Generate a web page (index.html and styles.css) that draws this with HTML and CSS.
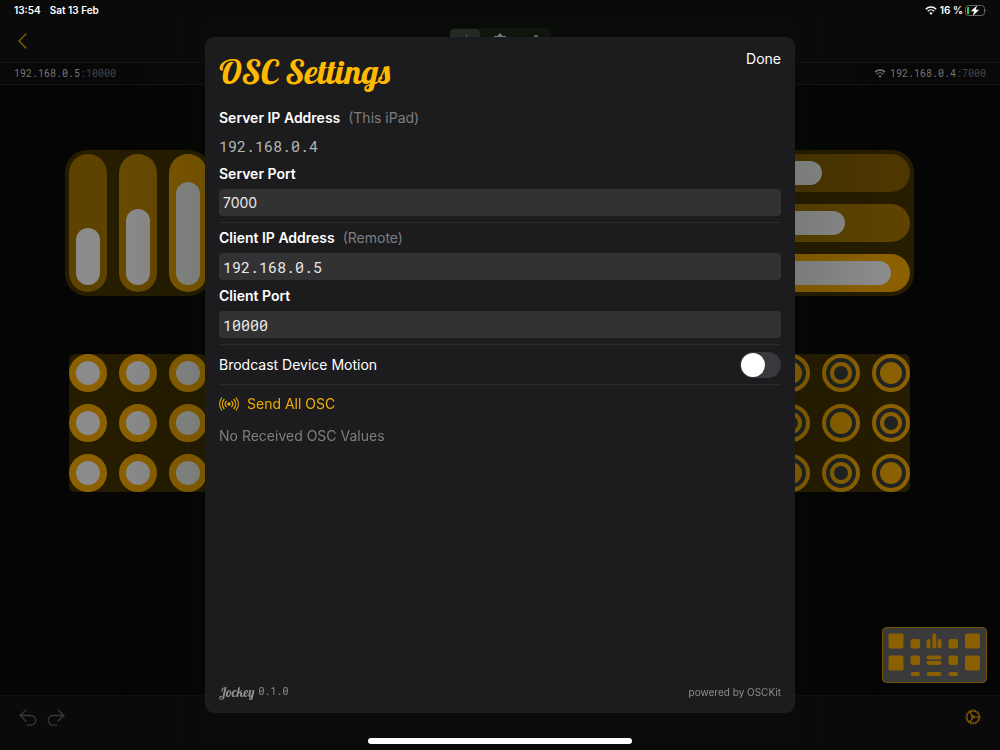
FILE: index.html
```html
<!DOCTYPE html>
<html lang="en">
<head>
  <meta charset="UTF-8">
  <meta name="viewport" content="width=device-width, initial-scale=1.0">
  <title>Jockey - OSC Settings</title>
  <link rel="stylesheet" href="styles.css">
</head>
<body>
  <svg class="defs">
    <symbol id="wifi" viewBox="0 0 12 9">
      <path d="M.8 3.2a7.4 7.4 0 0 1 10.4 0M2.7 5.2a4.7 4.7 0 0 1 6.6 0" fill="none" stroke="currentColor" stroke-width="1.4"/>
      <path d="M6 8.8 4.3 7a2.4 2.4 0 0 1 3.4 0z" fill="currentColor"/>
    </symbol>
  </svg>

  <div class="app">
    <header class="status">
      <span>13:54</span>
      <span>Sat 13 Feb</span>
      <svg class="wifi push" width="12" height="9"><use href="#wifi"/></svg>
      <span class="percent">16 %</span>
      <svg class="battery" width="22" height="11" viewBox="0 0 22 11">
        <rect x=".5" y=".5" width="19" height="10" rx="3" fill="none" stroke="#666"/>
        <path d="M20.7 3.8q1.2 1.7 0 3.4z" fill="#666"/>
        <path d="M2 3.2Q2 2 3.2 2H4v7h-.8Q2 9 2 7.800z" fill="#30d158"/>
        <path d="M12 .4 5.700 6.300h3.400L7.800 10.700l6.400-6h-3.400z" fill="#fff"/>
      </svg>
    </header>

    <nav class="toolbar">
      <button class="icon back" aria-label="Back">
        <svg width="10" height="16" viewBox="0 0 10 16"><path d="M9 1 2 8l7 7"/></svg>
      </button>
      <div class="tabs">
        <button class="on" aria-label="Edit"><svg width="14" height="18" viewBox="0 0 14 18"><path d="M9.500 1 5 10h3L5.500 17 11 7H8z"/></svg></button>
        <button aria-label="Pads"><svg width="14" height="18" viewBox="0 0 14 18"><path d="M7 1 10 4H13v10H1V4h3z"/></svg></button>
        <button aria-label="More"><svg width="14" height="18" viewBox="0 0 14 18"><circle cx="8" cy="5" r="2"/><circle cx="8" cy="12" r="2"/></svg></button>
      </div>
    </nav>

    <div class="addresses">
      <span>192.168.0.5<span class="port">:10000</span></span>
      <span><svg class="wifi" width="12" height="9"><use href="#wifi"/></svg>192.168.0.4<span class="port">:7000</span></span>
    </div>

    <main class="canvas">
      <div class="sliders">
        <div class="slider low"><div class="fill" style="height: 46%"></div><input type="range" value="46" aria-label="Fader 1"></div>
        <div class="slider mid"><div class="fill" style="height: 61%"></div><input type="range" value="61" aria-label="Fader 2"></div>
        <div class="slider high"><div class="fill" style="height: 83%"></div><input type="range" value="83" aria-label="Fader 3"></div>
      </div>
      <div class="sliders rows">
        <div class="slider dim"><div class="fill" style="width: 35%"></div><input type="range" value="35" aria-label="Slider 1"></div>
        <div class="slider low"><div class="fill" style="width: 53%"></div><input type="range" value="53" aria-label="Slider 2"></div>
        <div class="slider full"><div class="fill" style="width: 90%"></div><input type="range" value="90" aria-label="Slider 3"></div>
      </div>
      <div class="pads">
        <button class="pad" aria-label="Pad 1"></button>
        <button class="pad" aria-label="Pad 2"></button>
        <button class="pad" aria-label="Pad 3"></button>
        <button class="pad" aria-label="Pad 4"></button>
        <button class="pad" aria-label="Pad 5"></button>
        <button class="pad" aria-label="Pad 6"></button>
        <button class="pad" aria-label="Pad 7"></button>
        <button class="pad" aria-label="Pad 8"></button>
        <button class="pad" aria-label="Pad 9"></button>
      </div>
      <div class="pads">
        <button class="ring on" aria-label="Toggle 1"></button>
        <button class="ring" aria-label="Toggle 2"></button>
        <button class="ring on" aria-label="Toggle 3"></button>
        <button class="ring" aria-label="Toggle 4"></button>
        <button class="ring on" aria-label="Toggle 5"></button>
        <button class="ring" aria-label="Toggle 6"></button>
        <button class="ring on" aria-label="Toggle 7"></button>
        <button class="ring" aria-label="Toggle 8"></button>
        <button class="ring on" aria-label="Toggle 9"></button>
      </div>

      <svg class="minimap" width="105" height="56" viewBox="0 0 105 56">
        <rect x=".5" y=".5" width="104" height="55" rx="4" fill="#3a3a3a" stroke="#7a5500"/>
        <g fill="#8b6000">
          <rect x="6.500" y="6.500" width="15" height="15" rx="2"/><rect x="6.500" y="28.500" width="15" height="15" rx="2"/>
          <rect x="83" y="6.500" width="15" height="15" rx="2"/><rect x="83" y="28.500" width="15" height="15" rx="2"/>
          <rect x="28.500" y="12" width="9.500" height="9.500" rx="2"/><rect x="28.500" y="28.500" width="9.500" height="9.500" rx="2"/>
          <rect x="66.500" y="12" width="9.500" height="9.500" rx="2"/><rect x="66.500" y="28.500" width="9.500" height="9.500" rx="2"/>
          <rect x="44.500" y="12" width="4" height="9.500" rx="2"/><rect x="50.300" y="6.500" width="4" height="15" rx="2"/><rect x="55.500" y="12" width="4" height="9.500" rx="2"/>
          <rect x="44.500" y="28.500" width="15" height="4" rx="2"/><rect x="44.500" y="34" width="15" height="4" rx="2"/>
          <rect x="28.500" y="45" width="9.500" height="4" rx="2"/><rect x="44.500" y="45" width="15" height="4" rx="2"/><rect x="66.500" y="45" width="9.500" height="4" rx="2"/>
        </g>
      </svg>
    </main>

    <footer class="bottom">
      <button class="icon" aria-label="Undo">
        <svg width="18" height="17" viewBox="0 0 18 17"><path d="M7 1 1 6.500 7 12M1 6.500h11a4.800 4.800 0 0 1 0 9.600H8"/></svg>
      </button>
      <button class="icon" aria-label="Redo">
        <svg width="18" height="17" viewBox="0 0 18 17"><path d="m11 1 6 5.500-6 5.500M17 6.500H6a4.800 4.800 0 0 0 0 9.600h4"/></svg>
      </button>
      <button class="icon gear push" aria-label="Settings">
        <svg width="16" height="16" viewBox="0 0 16 16">
          <circle cx="8" cy="8" r="6.200"/>
          <circle class="teeth" cx="8" cy="8" r="7.200"/>
          <circle cx="8" cy="8" r="1.200"/>
          <path d="M9.300 8H14M7.300 6.900 5 2.800M7.300 9.100 5 13.200"/>
        </svg>
      </button>
    </footer>
  </div>

  <div class="overlay">
    <section class="modal" role="dialog" aria-labelledby="title">
      <div class="head">
        <h1 id="title">OSC Settings</h1>
        <button class="done">Done</button>
      </div>
      <form>
        <div class="name"><b>Server IP Address</b> <span>(This iPad)</span></div>
        <div class="ip">192.168.0.4</div>
        <label class="name" for="sPort"><b>Server Port</b></label>
        <input class="field plain" type="text" id="sPort" value="7000">
        <hr>
        <label class="name" for="cIp"><b>Client IP Address</b> <span>(Remote)</span></label>
        <input class="field" type="text" id="cIp" value="192.168.0.5">
        <label class="name" for="cPort"><b>Client Port</b></label>
        <input class="field" type="text" id="cPort" value="10000">
        <hr>
        <div class="motion">
          <label for="motion">Brodcast Device Motion</label>
          <input class="switch" type="checkbox" id="motion">
        </div>
        <hr class="tight">
        <button class="send" type="button">
          <svg width="20" height="14" viewBox="0 0 20 14">
            <circle cx="10" cy="7" r="1.700"/>
            <path d="M7.300 4.300a4 4 0 0 0 0 5.400M12.700 4.300a4 4 0 0 1 0 5.400M5 2.500a7 7 0 0 0 0 9M15 2.500a7 7 0 0 1 0 9M2.700 1a10 10 0 0 0 0 12M17.300 1a10 10 0 0 1 0 12"/>
          </svg>
          Send All OSC
        </button>
        <p class="none">No Received OSC Values</p>
      </form>
      <div class="foot">
        <span class="brand">Jockey</span>
        <span class="version">0.1.0</span>
        <span class="push">powered by OSCKit</span>
      </div>
    </section>
    <div class="home"></div>
  </div>
</body>
</html>
```
FILE: styles.css
```css
*,
*::before {
  box-sizing: border-box;
}
body {
  margin: 0;
  background: #050505;
  color: #fff;
  font-family: Inter, "Liberation Sans", sans-serif;
  font-size: 14px;
}
button {
  border: 0;
  padding: 0;
  background: none;
  color: inherit;
  font: inherit;
  cursor: pointer;
}
.defs {
  display: none;
}
.push {
  margin-left: auto;
}
.app {
  min-height: 100vh;
  display: flex;
  flex-direction: column;
}

/* status bar and toolbar */
.status {
  position: relative;
  z-index: 3;
  height: 20px;
  padding: 0 13px 0 14px;
  display: flex;
  align-items: center;
  font-size: 10px;
  font-weight: 600;
}
.status span + span {
  margin-left: 9px;
}
.status .percent {
  margin: 0 2px 0 3px;
}
.status,
.toolbar {
  background: #0a0a0a;
}
.toolbar {
  height: 42px;
  padding: 0 17px;
  display: grid;
  grid-template-columns: 1fr auto 1fr;
  align-items: center;
}
.icon {
  display: flex;
  color: #383838;
}
.icon svg {
  fill: none;
  stroke: currentColor;
  stroke-width: 1.3;
  stroke-linecap: round;
}
.back,
.gear {
  color: #8b6000;
}
.icon .teeth {
  stroke-width: 1;
  stroke-dasharray: 1.26 1.26;
  stroke-linecap: butt;
}
.gear svg {
  stroke-width: 1.2;
}
.tabs {
  display: flex;
  gap: 5px;
  width: 102px;
  height: 26px;
  padding: 1px;
  border-radius: 6px;
  background: #121611;
}
.tabs button {
  flex: 1;
  border-radius: 5px;
}
.tabs .on {
  background: #292e29;
}
.tabs svg {
  display: block;
  margin: auto;
  fill: #858985;
}
.addresses {
  height: 23px;
  padding: 0 14px;
  display: flex;
  align-items: center;
  justify-content: space-between;
  border-top: 1px solid #151515;
  border-bottom: 1px solid #151515;
  background: #080808;
  color: #747474;
  font-family: "Roboto Mono", "Liberation Mono", monospace;
  font-size: 10px;
}
.addresses > span {
  display: flex;
  align-items: center;
}
.addresses .wifi {
  margin-right: 4px;
}
.port {
  color: #454545;
}

/* controls */
.canvas {
  position: relative;
  flex: 1;
  padding: 65px 86px 0 65px;
  display: grid;
  grid-template-columns: 146px 146px;
  justify-content: space-between;
  align-content: start;
  gap: 58px 0;
}
.sliders {
  height: 146px;
  padding: 4px;
  display: flex;
  gap: 12px;
  border-radius: 22px;
  background: #261c00;
}
.rows {
  flex-direction: column;
}
.slider {
  flex: 1;
  display: grid;
  align-items: end;
  padding: 7px;
  border-radius: 19px;
}
.slider > * {
  grid-area: 1 / 1;
}
.slider input {
  width: 100%;
  height: 100%;
  margin: 0;
  opacity: 0;
}
.sliders:not(.rows) input {
  writing-mode: vertical-lr;
  direction: rtl;
}
.fill {
  border-radius: 12px;
  background: #8b8b8b;
}
.rows .fill {
  height: 100%;
}
.dim { background: #4d3600; }
.low { background: #5d4200; }
.mid { background: #694a00; }
.high { background: #805800; }
.full { background: #8b6000; }

.pads {
  width: 138px;
  margin: 0 4px;
  display: grid;
  grid-template-columns: repeat(3, 38px);
  gap: 12px;
  border-radius: 6px;
  background: #261c00;
}
.pad,
.ring {
  height: 38px;
  border-radius: 50%;
}
.pad {
  border: 7px solid #8b6000;
  background: #8b8b8b;
}
.ring {
  display: flex;
  border: 4px solid #8b6000;
  padding: 4px;
  background: #202322;
}
.ring::before {
  content: "";
  width: 22px;
  height: 22px;
  border: 4px solid #8b6000;
  border-radius: 50%;
}
.ring.on::before {
  background: #8b6000;
}
.minimap {
  position: absolute;
  right: 13px;
  bottom: 12px;
}
.bottom {
  height: 55px;
  padding: 13px 19px 0;
  display: flex;
  align-items: flex-start;
  gap: 10px;
  border-top: 1px solid #111;
  background: #0a0a0a;
}

/* settings sheet */
.overlay {
  position: fixed;
  inset: 0;
  z-index: 2;
  padding: 37px 16px 6px;
  display: flex;
  flex-direction: column;
  align-items: center;
  background: linear-gradient(90deg, transparent 12%, rgba(4, 24, 0, .14) 21%, rgba(4, 24, 0, .14) 79%, transparent 88%);
}
.modal {
  flex: 1;
  width: 100%;
  max-width: 590px;
  padding: 9px 14px 11px;
  display: flex;
  flex-direction: column;
  border-radius: 9px;
  background: #1c1c1e;
}
.head {
  height: 62px;
  display: flex;
  align-items: flex-start;
  justify-content: space-between;
}
h1 {
  margin: 6px 0 0;
  color: #ffb900;
  font: 34px/40px Lobster, "Liberation Serif", serif;
}
.done {
  line-height: 26px;
}
form {
  display: flex;
  flex-direction: column;
}
.name,
.ip {
  line-height: 20px;
}
.name b {
  font-weight: 600;
}
.name span {
  margin-left: 4px;
  color: #7e7e80;
}
.ip {
  margin: 8px 0;
  color: #b4b4b6;
}
.ip,
.field {
  font-family: "Roboto Mono", "Liberation Mono", monospace;
  font-size: 15px;
}
.field {
  width: 100%;
  height: 27px;
  margin: 5px 0 6px;
  padding: 0 4px;
  border: 0;
  border-radius: 4px;
  background: #323234;
  color: #e8e8e8;
}
.plain {
  font-family: inherit;
  font-size: 14px;
}
hr {
  width: 100%;
  height: 1px;
  margin: 0 0 5px;
  border: 0;
  background: #2b2b2d;
}
.motion {
  height: 39px;
  margin-top: -5px;
  display: flex;
  align-items: center;
  justify-content: space-between;
}
.tight {
  margin: 0;
}
.switch {
  appearance: none;
  width: 41px;
  height: 26px;
  margin: 0;
  padding: 1px;
  border-radius: 13px;
  background: #39393d;
}
.switch::before {
  content: "";
  display: block;
  width: 24px;
  height: 24px;
  border-radius: 50%;
  background: #fff;
}
.switch:checked::before {
  margin-left: auto;
}
.send {
  margin-top: 9px;
  display: flex;
  align-items: center;
  gap: 8px;
  color: #f0ad00;
  line-height: 20px;
}
.send svg {
  fill: none;
  stroke: currentColor;
  stroke-width: 1.2;
  stroke-linecap: round;
}
.send circle {
  fill: currentColor;
  stroke: none;
}
.none {
  margin: 12px 0 0;
  color: #7e7e80;
  line-height: 20px;
}
.foot {
  margin-top: auto;
  display: flex;
  align-items: center;
  gap: 4px;
  color: #8e8e90;
  font-size: 10px;
  line-height: 20px;
}
.brand {
  font: 13px/20px Lobster, "Liberation Serif", serif;
}
.version {
  font-family: "Roboto Mono", "Liberation Mono", monospace;
}
.home {
  width: 264px;
  height: 6px;
  margin-top: 25px;
  border-radius: 3px;
  background: #fff;
}
```
